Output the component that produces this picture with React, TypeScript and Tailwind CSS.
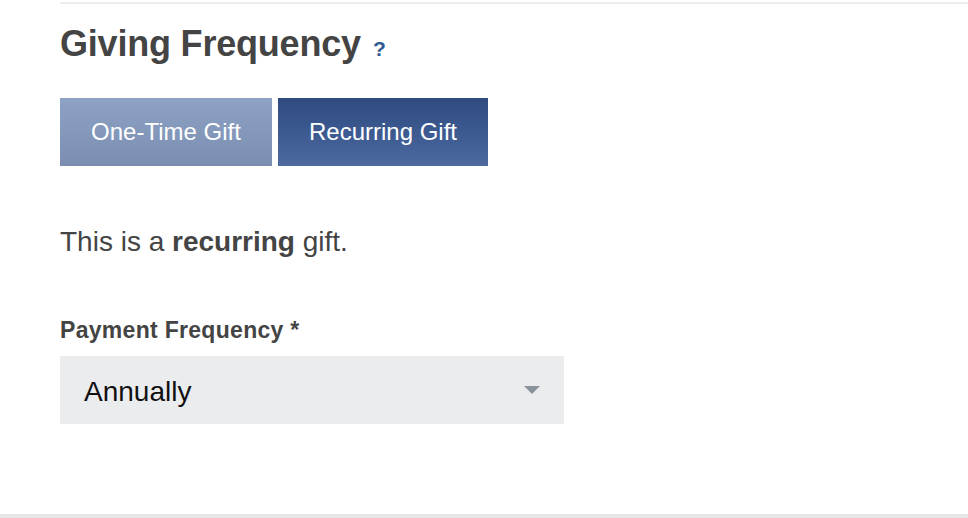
import React from "react";

export default function App() {
  return (
    <div
      className="w-[968px] h-[518px] bg-white flex flex-col overflow-hidden"
      style={{ fontFamily: '"Liberation Sans", Arial, Helvetica, sans-serif' }}
    >
      <div className="ml-[60px] mt-[2px] h-[2px] bg-[#ededed]" />
      <div className="pl-[60px] flex flex-col">
        <div className="mt-[22px] h-[36px] flex items-baseline">
          <h1 className="text-[36px] leading-[36px] font-bold text-[#444444] tracking-[-0.2px]">
            Giving Frequency
          </h1>
          <span className="ml-[12px] text-[21px] leading-[36px] font-bold text-[#2f5a93]">?</span>
        </div>
        <div className="mt-[36px] flex gap-[6px]">
          <button className="w-[212px] h-[68px] flex items-center justify-center text-white text-[24px] leading-none bg-gradient-to-b from-[#8da2c4] to-[#7b8eb1]">
            One-Time Gift
          </button>
          <button className="w-[210px] h-[68px] flex items-center justify-center text-white text-[24px] leading-none bg-gradient-to-b from-[#2e4a81] to-[#4c6a9f]">
            Recurring Gift
          </button>
        </div>
        <p className="mt-[62px] text-[28px] leading-[28px] text-[#444444]">
          This is a <span className="font-bold">recurring</span> gift.
        </p>
        <label className="mt-[63px] text-[23px] leading-[23px] font-bold text-[#444444] tracking-[0.3px]">
          Payment Frequency *
        </label>
        <div className="mt-[14px] w-[504px] h-[68px] bg-[#ebecee] flex items-center justify-between pl-[24px] pr-[24px]">
          <span className="pt-[3px] text-[28px] leading-[28px] text-[#111111]">Annually</span>
          <svg width="16" height="8" viewBox="0 0 16 8">
            <path d="M0 0 L16 0 L8 8 Z" fill="#8a939c" />
          </svg>
        </div>
      </div>
      <div className="mt-auto h-[4px] bg-[#e6e6e6]" />
    </div>
  );
}
